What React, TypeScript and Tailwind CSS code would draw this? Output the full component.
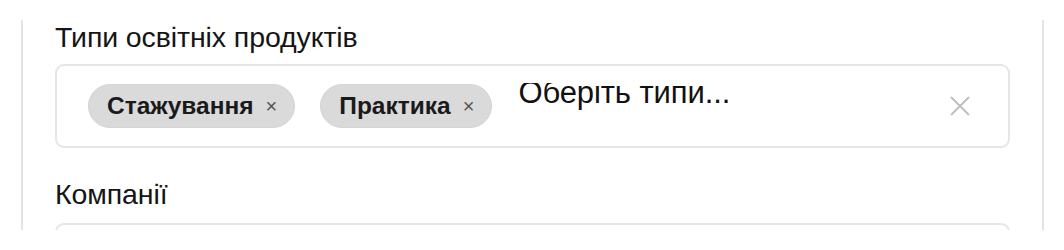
import React from "react";

const Chip = ({ label }: { label: string }) => (
  <span className="flex h-[44px] shrink-0 items-center gap-[12px] rounded-full border border-[#d4d4d4] bg-[#dadada] pl-[18px] pr-[17px]">
    <span className="text-[24.5px] leading-[28px] font-bold text-[#1a1a1a]">{label}</span>
    <span className="text-[20px] leading-[20px] text-[#555]">×</span>
  </span>
);

export default function App() {
  return (
    <div className="bg-white pt-[20px] pl-[21px] pr-[20px]" style={{ fontFamily: '"Liberation Sans", Arial, sans-serif' }}>
      <div className="h-[210px] overflow-hidden border-x-2 border-[#e4e4e4] px-[32px] pt-[3px]">
        <div className="flex flex-col">
          <label className="text-[28.5px] leading-[28px] tracking-[-0.1px] text-[#151515]">Типи освітніх продуктів</label>
          <div className="mt-[13px] flex h-[84px] shrink-0 items-center rounded-[9px] border-2 border-[#e6e6e6] pl-[31px] pr-[37px]">
            <div className="flex flex-1 items-center gap-[25px]">
              <Chip label="Стажування" />
              <Chip label="Практика" />
              <div className="ml-[1px] h-[46px] overflow-hidden">
                <div className="-mt-[6px] whitespace-nowrap text-[31px] leading-[31px] tracking-[-0.1px] text-[#111]">Оберіть типи...</div>
              </div>
            </div>
            <svg width="22" height="22" viewBox="0 0 22 22" className="shrink-0">
              <path d="M2 2 L20 20 M20 2 L2 20" stroke="#bdbdbd" strokeWidth="1.8" fill="none" />
            </svg>
          </div>
          <label className="mt-[32px] text-[28.5px] leading-[28px] tracking-[-0.1px] text-[#151515]">Компанії</label>
          <div className="mt-[15px] h-[84px] shrink-0 rounded-[9px] border-2 border-[#e6e6e6]" />
        </div>
      </div>
    </div>
  );
}
